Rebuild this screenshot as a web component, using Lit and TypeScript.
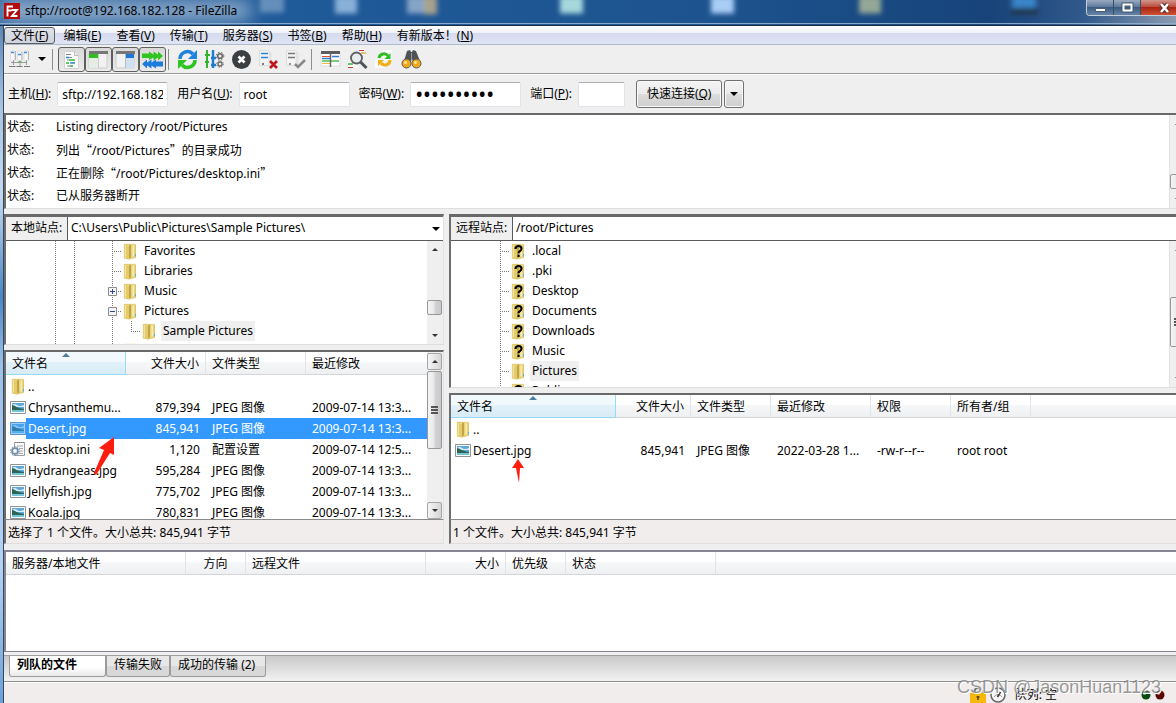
import { LitElement, html, css, svg } from "lit";
import { customElement } from "lit/decorators.js";
import { classMap } from "lit/directives/class-map.js";

const folder = svg`
  <path d="M2 1h7l5 1v12l-7 2.500-5-1z" fill="#ecd987"/>
  <path d="M2 1l5 1.500v13.500l-5-1z" fill="#f3e49b"/>
  <path d="M4 2l3 1v12.500l-3-.5z" fill="#e3cb6e"/>
  <path d="M7 2.500l2-1v13l-2 1z" fill="#c0a445"/>
  <path d="M9 2h4.500v12.500L9 15z" fill="#ead27a"/>
  <path d="M10.500 2.500h1.500v11h-1.500z" fill="#f8edb4"/>
  <path d="M2.300 1.300h11.200v13.200L7 16l-4.700-1z" fill="none" stroke="#d4bb58" stroke-width=".6"/>
  <path d="M13.500 11v2.500" stroke="#4fb3e6"/>`;

const picture = svg`
  <path d="M.5 2.500h15v12H.5z" fill="#fff" stroke="#8b939c"/>
  <path d="M2 4h12v9H2z" fill="#5ea7d8"/>
  <path d="M2 6q3-2 5 0t7 0v2H2z" fill="#d4ecf8"/>
  <path d="M2 6c3 0 4 3 12 4v1H2z" fill="#2d6655"/>
  <path d="M2 11h12v2H2z" fill="#74c4d8"/>`;

const glyphs: Record<string, unknown> = {
  folder,
  unknown: svg`${folder}<path d="M5.500 6q0-3 3-3t3 2.600q0 1.600-1.600 2.600-1.300.8-1.300 2M8.600 11.800v2.200" fill="none" stroke="#000" stroke-width="2.100"/>`,
  image: picture,
  imageSelected: svg`${picture}<path d="M0 2h16v13H0z" fill="#3399ff" opacity=".5"/>`,
  settings: svg`
    <path d="M4.500 1.500h10v13h-10z" fill="#fafafa" stroke="#9aa0a6"/>
    <path d="M5 1.500h9.500" stroke="#777" stroke-dasharray="1 1"/>
    <path d="M7 5h6M9 7.500h4M10 10h3M9 12.500h4" stroke="#a9adb2"/>
    <circle cx="5" cy="10" r="3" fill="#d6e2ee" stroke="#6f8ba8" stroke-width="1.600"/>
    <circle cx="5" cy="10" r="4.500" fill="none" stroke="#6f8ba8" stroke-dasharray="1.500 1.300"/>
    <circle cx="5" cy="10" r="1.200" fill="#fff"/>`,
};

const icon = (name: string) => html`<svg class="icon" viewBox="0 0 16 17" aria-hidden="true">${glyphs[name]}</svg>`;

const arrows = {
  down: html`<svg class="tri" viewBox="0 0 8 4" aria-hidden="true"><path d="M0 0h8L4 4z" /></svg>`,
  smallUp: html`<svg class="tri small" viewBox="0 0 8 4" aria-hidden="true"><path d="M0 4h8L4 0z" /></svg>`,
  smallDown: html`<svg class="tri small" viewBox="0 0 8 4" aria-hidden="true"><path d="M0 0h8L4 4z" /></svg>`,
};

const server = svg`<path d="M1.500 1.500h9l2 2v13h-11z" fill="#f4f4f4" stroke="#dcdcdc"/><path d="M10.500 2v14.500h3V4z" fill="#e2e2e2"/>`;

const tools: Record<string, unknown> = {
  sites: svg`
    <path d="M1.500 2h4v10h-4zM8.500 2h4v10h-4zM15 2h4v10h-4z" fill="#f8f8f8" stroke="#dadada" stroke-width=".8"/>
    <path d="M2 3.500h3M9 5.500h3M15 3.500h3" stroke="#3b8fe0" stroke-width="1.600"/>
    <path d="M6.500 2v9M13 3v8M19.500 2v9" stroke="#b5b5b5"/>
    <path d="M2 13.500h16M4.500 11v5M11 13v4M17.500 11v5" stroke="#9a9a9a" fill="none"/>
    <path d="M0 17.500h6.500M7.500 17.500h6M15 17.500h6" stroke="#777"/>
    <path d="M9.500 12.500h3" stroke="#5cb85c" stroke-width="1.500"/>`,
  log: svg`
    <path d="M3.500 2.500h10l4 4v13h-14z" fill="#fafafa" stroke="#d2d2d2"/>
    <path d="M13.500 2.500v4h4" fill="#eee" stroke="#bbb"/>
    <path d="M5 5.500h5M8 8.500h3M6 11h2M10 14h4M6 17h3" stroke="#888"/>
    <path d="M5 8.500h3M9 13.800h5" stroke="#1d87d8" stroke-width="1.300"/>
    <path d="M8 11h6M5 14h3M9 17h3" stroke="#35b535" stroke-width="1.300"/>`,
  local: svg`
    <path d="M1 4h18v15H1z" fill="#f2f2f2" stroke="#ccc"/><path d="M1 2h19v3H1z" fill="#777"/>
    <path d="M1 5h9v4H1z" fill="#2fbd22"/><path d="M1 9h9v10H1z" fill="#e6ede6"/><path d="M10.500 5v14" stroke="#ccc"/>`,
  remote: svg`
    <path d="M1 4h18v15H1z" fill="#f2f2f2" stroke="#ccc"/><path d="M1 2h19v3H1z" fill="#777"/>
    <path d="M11 5h8v4h-8z" fill="#1c78d4"/><path d="M11 9h8v10h-8z" fill="#cfe0f2"/><path d="M10.500 5v14" stroke="#bbb"/>`,
  queue: svg`
    <path d="M0 4.500h7v-2l4.500 3v-3l4.500 3v-3l5 4.500-5 4.500v-3l-4.500 3v-3L7 11V9H0z" fill="#2fc41f"/>
    <path d="M21 12.500h-7v-2l-4.500 3v-3l-4.500 3v-3L0 15l5 4.500v-3l4.500 3v-3l4.500 3v-2h7z" fill="#1d7cdb"/>`,
  refresh: svg`
    <path d="M3 10a7.500 7.500 0 0 1 13-5" fill="none" stroke="#1f82dc" stroke-width="3.600"/><path d="M20 1v9h-9z" fill="#1f82dc"/>
    <path d="M18 11a7.500 7.500 0 0 1-13 5" fill="none" stroke="#2bc420" stroke-width="3.600"/><path d="M1 20v-9h9z" fill="#2bc420"/>`,
  filter: svg`
    <path d="M3 1v18M1 6h5M1 13h4" stroke="#2fb52a" stroke-width="2"/>
    <path d="M9 1v18M7 9h5M7 16h5" stroke="#1d7cd0" stroke-width="2.400"/>
    <circle cx="16" cy="7" r="2.300" fill="none" stroke="#686868" stroke-width="1.600"/><circle cx="16" cy="7" r="3.800" fill="none" stroke="#686868" stroke-dasharray="1.500 1.600"/>
    <circle cx="16" cy="15" r="2" fill="none" stroke="#686868" stroke-width="1.400"/><circle cx="16" cy="15" r="3.300" fill="none" stroke="#686868" stroke-dasharray="1.300 1.300"/>`,
  cancel: svg`<circle cx="10.500" cy="10.500" r="9.500" fill="#3c3f42"/><path d="M7.500 7.500l6 6M13.500 7.500l-6 6" stroke="#fff" stroke-width="2.800"/>`,
  disconnect: svg`<g>${server}</g><path d="M3 4.500h7M3 8.500h7" stroke="#2a84d8" stroke-width="1.500"/><path d="M4 15h2" stroke="#555" stroke-width="1.500"/><path d="M12 12l7 7M19 12l-7 7" stroke="#c3161c" stroke-width="2.600"/>`,
  reconnect: svg`<g>${server}</g><path d="M3 4.500h7M3 8.500h7" stroke="#777" stroke-width="1.500"/><path d="M4 15h2" stroke="#777" stroke-width="1.500"/><path d="M10 15l3 3 7-7" fill="none" stroke="#888" stroke-width="2.600"/>`,
  listing: svg`
    <path d="M1 4h19v13H1z" fill="#fff" stroke="#ddd"/><path d="M1 2h19v3H1z" fill="#5c5c5c"/>
    <path d="M2 7.500h8" stroke="#e05030"/><path d="M2 9.500h8M12 7.500h7" stroke="#2a7cd0" stroke-width="1.300"/><path d="M2 12h17" stroke="#37b137" stroke-width="1.300"/><path d="M2 14.500h8" stroke="#edbd3c"/>
    <path d="M10.500 4v14" stroke="#666" stroke-width="1.500"/>`,
  search: svg`
    <path d="M10 0h8v6h-8zM1 13h9v6H1z" fill="#fff"/><path d="M12 1.500h5" stroke="#c33"/><path d="M14 4h5" stroke="#d8ae30" stroke-width="1.500"/><path d="M1 15h5" stroke="#2fae2f" stroke-width="1.500"/><path d="M1 18.500h5" stroke="#c33"/>
    <circle cx="9.500" cy="9" r="5.500" fill="#e9edf0" stroke="#5d6063" stroke-width="1.800"/><path d="M13.500 13l6 6" stroke="#505356" stroke-width="3"/>`,
  compare: svg`
    <path d="M9 1h9v11H9zM1 10h10v9H1z" fill="#fbfbfb"/>
    <path d="M5 9a5 5 0 0 1 9-2" fill="none" stroke="#2fbd22" stroke-width="3"/><path d="M16.500 4v6h-6z" fill="#2fbd22"/>
    <path d="M16 11a5 5 0 0 1-9 3" fill="none" stroke="#f0ae12" stroke-width="3"/><path d="M4 17v-6h6z" fill="#f0ae12"/>`,
  find: svg`
    <path d="M6 2l3-1 1 2h1l1-2 3 1 4 10-6 3-2-5-2 5-6-3z" fill="#505356"/><path d="M10.500 4v7" stroke="#999"/>
    <circle cx="5.500" cy="14.500" r="4.500" fill="#f0a81a" stroke="#5a5a5a"/><circle cx="15.500" cy="14.500" r="4.500" fill="#f0a81a" stroke="#5a5a5a"/>
    <circle cx="4.500" cy="13.500" r="1.600" fill="#ffe48f"/><circle cx="14.500" cy="13.500" r="1.600" fill="#ffe48f"/>`,
};

type Tool = { id: string; title: string; on?: boolean };
const toolGroups: Tool[][] = [
  [
    { id: "log", title: "消息日志", on: true },
    { id: "local", title: "本地目录树", on: true },
    { id: "remote", title: "远程目录树", on: true },
    { id: "queue", title: "传输队列", on: true },
  ],
  [
    { id: "refresh", title: "刷新" },
    { id: "filter", title: "过滤器" },
    { id: "cancel", title: "取消" },
    { id: "disconnect", title: "断开" },
    { id: "reconnect", title: "重新连接" },
  ],
  [
    { id: "listing", title: "目录比较" },
    { id: "search", title: "搜索" },
    { id: "compare", title: "同步浏览" },
    { id: "find", title: "查找" },
  ],
];

const menus = [
  ["文件", "F"], ["编辑", "E"], ["查看", "V"], ["传输", "T"],
  ["服务器", "S"], ["书签", "B"], ["帮助", "H"], ["有新版本！", "N"],
];

const log = [
  "Listing directory /root/Pictures",
  "列出“/root/Pictures”的目录成功",
  "正在删除“/root/Pictures/desktop.ini”",
  "已从服务器断开",
];

// Curly quotes take the full-width forms of the Chinese face.
const wideQuotes = (line: string) =>
  line.split(/([“”])/).map((part) => (part === "“" || part === "”" ? html`<span class="cjk">${part}</span>` : part));

type Node = { name: string; guides: string; icon: string; box?: string; current?: boolean };
// Guide letters: l = line, b = blank, t = branch, c = corner.
const localTree: Node[] = [
  { name: "Favorites", guides: "llbt", icon: "folder" },
  { name: "Libraries", guides: "llbt", icon: "folder" },
  { name: "Music", guides: "llbt", icon: "folder", box: "plus" },
  { name: "Pictures", guides: "llbt", icon: "folder", box: "minus" },
  { name: "Sample Pictures", guides: "llblc", icon: "folder", current: true },
  { name: "", guides: "llbt", icon: "folder" },
];
const remoteTree: Node[] = [
  ...[".local", ".pki", "Desktop", "Documents", "Downloads", "Music"].map((name) => ({ name, guides: "t", icon: "unknown" })),
  { name: "Pictures", guides: "t", icon: "folder", current: true },
  { name: "Public", guides: "t", icon: "unknown" },
];

type Col = { label: string; cls: string; align?: string };
type Row = { icon: string; cells: string[]; selected?: boolean };
const localCols: Col[] = [
  { label: "文件名", cls: "w120 sorted" },
  { label: "文件大小", cls: "w80", align: "right" },
  { label: "文件类型", cls: "w100" },
  { label: "最近修改", cls: "" },
];
const jpeg = "JPEG 图像";
const localRows: Row[] = [
  { icon: "folder", cells: ["..", "", "", ""] },
  { icon: "image", cells: ["Chrysanthemu...", "879,394", jpeg, "2009-07-14 13:3..."] },
  { icon: "imageSelected", cells: ["Desert.jpg", "845,941", jpeg, "2009-07-14 13:3..."], selected: true },
  { icon: "settings", cells: ["desktop.ini", "1,120", "配置设置", "2009-07-14 12:5..."] },
  { icon: "image", cells: ["Hydrangeas.jpg", "595,284", jpeg, "2009-07-14 13:3..."] },
  { icon: "image", cells: ["Jellyfish.jpg", "775,702", jpeg, "2009-07-14 13:3..."] },
  { icon: "image", cells: ["Koala.jpg", "780,831", jpeg, "2009-07-14 13:3..."] },
];
const remoteCols: Col[] = [
  { label: "文件名", cls: "w165 sorted" },
  { label: "文件大小", cls: "w75", align: "right" },
  { label: "文件类型", cls: "w80" },
  { label: "最近修改", cls: "w100" },
  { label: "权限", cls: "w80" },
  { label: "所有者/组", cls: "w80" },
  { label: "", cls: "" },
];
const remoteRows: Row[] = [
  { icon: "folder", cells: ["..", "", "", "", "", "", ""] },
  { icon: "image", cells: ["Desert.jpg", "845,941", jpeg, "2022-03-28 1...", "-rw-r--r--", "root root", ""] },
];
const queueCols: Col[] = [
  { label: "服务器/本地文件", cls: "w180" },
  { label: "方向", cls: "w60", align: "center" },
  { label: "远程文件", cls: "w180" },
  { label: "大小", cls: "w80", align: "right" },
  { label: "优先级", cls: "w60" },
  { label: "状态", cls: "w150" },
  { label: "", cls: "" },
];

const table = (cols: Col[], rows: Row[]) => html`
  <table>
    <thead>
      <tr>
        ${cols.map((c) => html`<th scope="col" class="${c.cls} ${c.align ?? ""}">${c.label}</th>`)}
      </tr>
    </thead>
    <tbody>
      ${rows.map(
        (r) => html`<tr class=${classMap({ selected: !!r.selected })}>
          ${r.cells.map((text, i) =>
            i === 0
              ? html`<td class="name"><span class="entry">${icon(r.icon)}<span class="entry-label">${text}</span></span></td>`
              : html`<td class=${cols[i].align ?? ""}>${text}</td>`,
          )}
        </tr>`,
      )}
    </tbody>
  </table>`;

const tree = (nodes: Node[]) => html`
  <ul class="tree">
    ${nodes.map(
      (n) => html`<li class="node">
        ${[...n.guides].map(
          (g, i) => html`<span class="guide ${g}">${n.box && i === n.guides.length - 1
            ? html`<svg class="box" viewBox="0 0 9 9" aria-hidden="true"><path d="M.5.5h8v8h-8z" fill="#f4f4f4" stroke="#8c8c8c" /><path d=${n.box === "plus" ? "M2 4.500h5M4.500 2v5" : "M2 4.500h5"} stroke="#2a4a9c" /></svg>`
            : ""}</span>`,
        )}
        ${icon(n.icon)}<span class=${classMap({ "node-label": true, current: !!n.current })}>${n.name}</span>
      </li>`,
    )}
  </ul>`;

const scrollbar = (kind: string) => html`
  <div class="scrollbar ${kind}" aria-hidden="true">
    <div class="track">
      <span class="step">${arrows.smallUp}</span>
      <span class="before"></span>
      <span class="thumb"><i></i></span>
      <span class="after"></span>
      <span class="step">${arrows.smallDown}</span>
    </div>
  </div>`;

@customElement("app-root")
export class AppRoot extends LitElement {
  static styles = css`
    * { box-sizing: border-box; }
    :host {
      display: flex;
      flex-direction: column;
      height: 100vh;
      overflow: hidden;
      background: #efefef;
      color: #000;
      font: 12px/16px "Noto Sans", "Noto Sans CJK SC", sans-serif;
    }
    button, input, select { font: inherit; color: inherit; margin: 0; border-radius: 0; }
    button { padding: 0; border: 0; background: none; white-space: nowrap; }
    .cjk { font-family: "Noto Sans CJK SC", sans-serif; }
    .titlebar {
      position: relative;
      flex: none;
      display: flex;
      justify-content: space-between;
      height: 26px;
      overflow: hidden;
      background: linear-gradient(90deg, #3f6fa4 0, #1f5a99 24%, #1d548f 60%, #17437a 84%, #30588a 92%, #8b9bb1 100%);
      border-bottom: 1px solid #1b2c45;
    }
    .backdrop { position: absolute; inset: 0; width: 100%; height: 100%; }
    .title { position: relative; display: flex; align-items: center; gap: 5px; height: 22px; padding-left: 4px; }
    .logo { width: 16px; height: 16px; }
    .window-buttons { position: relative; display: flex; height: 16px; border: 1px solid #c3cedb; border-width: 0 0 1px 1px; border-radius: 0 0 0 4px; overflow: hidden; }
    .window-buttons button { display: grid; place-items: center; width: 27px; border-right: 1px solid #3a4c63; background: linear-gradient(#9aabc0, #5f7a9b 45%, #395a80 46%, #6585a8); }
    .window-buttons .close { width: 35px; padding-left: 12px; border: 0; background: linear-gradient(#d0958b, #bd4f3e 45%, #a8200f 46%, #cd5133); }
    .window-buttons svg { width: 13px; height: 12px; }
    .frame { flex: 1; min-height: 0; display: flex; flex-direction: column; padding-left: 3px; background: linear-gradient(#5d86b6, #a9c4e2 12%, #c5d8ee 25%, #4a86c4 40%, #9dc0e6 50%, #b4d2f2 80%, #6ba0d6 100%); }
    .client { flex: 1; min-height: 0; display: flex; flex-direction: column; border-left: 1px solid #35475c; background: #efefef; }
    .menubar { flex: none; display: flex; gap: 1px; height: 19px; padding-top: 1px; background: linear-gradient(#fff 0, #eef1f8 38%, #d5dbed 40%, #dfe5f5 100%); border-bottom: 1px solid #b2b9cb; }
    .menubar button { height: 17px; padding: 0 6px; border: 1px solid transparent; border-radius: 3px; }
    .menubar button:first-child { border-color: #5b5f66; background: linear-gradient(#dfe2e8, #cfd3dd); }
    .toolbar { flex: none; display: flex; align-items: center; height: 29px; padding-left: 2px; border-bottom: 1px solid #9c9c9c; }
    .tool { display: grid; place-items: center; width: 27px; height: 25px; }
    .tool svg { width: 21px; height: 21px; }
    .tool.on { border: 1px solid #5f5f5f; border-radius: 3px; background: linear-gradient(#d9d9d9, #ebebeb); }
    .drop { display: grid; place-items: center; width: 17px; height: 25px; }
    .sep { width: 8px; height: 21px; padding-left: 2px; }
    .sep::before { content: ""; display: block; width: 1px; height: 100%; background: #8e8e8e; }
    .tri { display: block; width: 8px; height: 4px; }
    .tri.small { width: 6px; height: 3px; fill: #333; }
    .quick { flex: none; display: flex; align-items: center; gap: 9px; height: 39px; padding: 0 4px; border-top: 1px solid #fff; }
    .field { display: flex; align-items: center; gap: 6px; white-space: nowrap; }
    .field input { width: 111px; height: 25px; padding: 0 4px; border: 1px solid #e0e4ea; border-top-color: #abadb3; border-radius: 2px; background: #fff; outline: 0; }
    .field input[type="password"] { font-size: 21px; }
    .field .port { width: 47px; }
    .connect { display: flex; gap: 2px; padding-left: 2px; }
    .connect button { height: 28px; padding: 0 10px; border: 1px solid #707070; border-radius: 3px; background: linear-gradient(#f4f4f4, #ebebeb 48%, #dcdcdc 50%, #cfcfcf); box-shadow: inset 0 0 0 1px #fafafa; }
    .connect .more { padding: 0 5px; }
    .sunken { border-top: 2px solid #696969; border-left: 2px solid #6e6e6e; border-bottom: 1px solid #dedede; background: #fff; }
    .log { flex: none; display: flex; height: 96px; }
    .log dl { flex: 1; min-width: 0; margin: 0; padding-left: 1px; display: grid; grid-template-columns: 49px 1fr; grid-auto-rows: 23px; line-height: 23px; white-space: nowrap; }
    .log dd { margin: 0; }
    .panes { flex: 1; min-height: 0; display: grid; grid-template-columns: minmax(0, 440fr) minmax(0, 727fr); grid-template-rows: minmax(0, 1fr); gap: 5px; padding-top: 5px; }
    .pane { min-width: 0; min-height: 0; display: grid; }
    .local { grid-template-rows: minmax(0, 131fr) 5px minmax(0, 170fr) 24px; }
    .remote { grid-template-rows: minmax(0, 174fr) 5px minmax(0, 127fr) 24px; }
    .local .sunken, .local .status { border-right: 1px solid #e3e3e3; }
    .site { grid-row: 1; display: flex; flex-direction: column; min-height: 0; overflow: hidden; border-top-width: 3px; }
    .path { flex: none; display: flex; height: 24px; border-bottom: 1px solid #5a5a5a; }
    .path label { width: 62px; padding-left: 5px; line-height: 22px; white-space: nowrap; background: #efefef; border-right: 1px solid #5a5a5a; }
    .combo { position: relative; flex: 1; min-width: 0; display: flex; align-items: center; justify-content: flex-end; padding-right: 3px; }
    .combo select { position: absolute; inset: 0; width: 100%; padding: 0 3px 2px; border: 0; background: none; appearance: none; outline: 0; }
    .scroller { flex: 1; min-height: 0; display: flex; }
    .tree { flex: 1; min-width: 0; margin: 0; padding: 0 0 0 49px; list-style: none; overflow: hidden; }
    .node { display: flex; align-items: center; height: 20px; white-space: nowrap; }
    .guide { position: relative; flex: none; width: 19px; height: 20px; }
    .guide.l, .guide.t { background: repeating-linear-gradient(#777 0 1px, #fff 1px 2px) 0 0 / 1px 100% no-repeat; }
    .guide.t, .guide.c { width: 10px; }
    .guide.c { background: repeating-linear-gradient(#777 0 1px, #fff 1px 2px) 0 0 / 1px 10px no-repeat; }
    .guide.t::after, .guide.c::after { content: ""; position: absolute; inset: 10px 0 auto 0; height: 1px; background: repeating-linear-gradient(90deg, #777 0 1px, #fff 1px 2px); }
    .box { position: absolute; z-index: 1; top: 6px; left: -4px; width: 9px; height: 9px; }
    .icon { flex: none; width: 16px; height: 17px; }
    .node-label { margin-left: 4px; padding: 0 2px; line-height: 20px; }
    .current { background: #efefef; }
    .scrollbar { flex: none; width: 16px; overflow: hidden; background: #efefef; }
    .track { display: flex; flex-direction: column; width: 16px; height: 100%; }
    .step { flex: none; display: grid; place-items: center; width: 15px; height: 17px; }
    .thumb { flex: none; display: grid; place-items: center; width: 15px; border: 1px solid #979797; border-radius: 2px; background: linear-gradient(90deg, #f5f5f5, #e9e9eb 45%, #d3d3d6 55%, #c9c9cc); }
    .thumb i { width: 7px; height: 8px; background: repeating-linear-gradient(#555 0 2px, transparent 2px 3px); }
    .cut { width: 6px; box-shadow: -1px 0 #e2e2e2; }
    .short .thumb, .logbar .thumb { height: 15px; }
    .short i, .logbar i { display: none; }
    .short .before { flex: 42 1 0; }
    .short .after { flex: 12 1 0; }
    .logbar .before { flex: 43 1 0; }
    .logbar .after { flex: 2 1 0; }
    .mid .before { flex: 39 1 0; }
    .mid .after { flex: 23 1 0; }
    .mid .thumb { height: 50px; }
    .list .step { border: 1px solid #a5a5a5; border-radius: 2px; background: linear-gradient(90deg, #f5f5f5, #d5d5d8); }
    .list .track { padding-top: 1px; }
    .list .before { height: 1px; }
    .list .after { flex: 54 1 0; }
    .list .thumb { flex: 77 1 0; }
    .files { grid-row: 3; position: relative; display: flex; flex-direction: column; min-height: 0; border-bottom: 1px solid #8a8a8a; }
    .grid { flex: 1; min-width: 0; overflow: hidden; }
    table { width: 100%; border-collapse: separate; border-spacing: 0; table-layout: fixed; }
    th { position: relative; height: 23px; padding: 2px 6px 0; font-weight: 400; text-align: left; line-height: 20px; white-space: nowrap; border-right: 1px solid #e1e3e6; border-bottom: 1px solid #d3d5d8; background: linear-gradient(#fff 0 10px, #f6f7f9 10px, #eff0f2 100%); }
    th:last-child { border-right: 0; }
    th.sorted { border-right-color: #96d9f9; border-bottom-color: #96d9f9; background: linear-gradient(#f2f9fc 0 10px, #e1f1f9 10px, #d8ecf6 100%); }
    .sorted::after { content: ""; position: absolute; top: 1px; left: 50%; margin-left: -4px; border: 4px solid transparent; border-width: 0 4px 4px; border-bottom-color: #4d7f9d; }
    td { height: 21px; padding: 0 6px; line-height: 21px; white-space: nowrap; overflow: hidden; }
    tbody tr:first-child td { height: 22px; }
    .right { text-align: right; }
    .center { text-align: center; }
    td.name { padding: 0 0 0 4px; overflow: visible; }
    .entry { display: flex; align-items: center; gap: 2px; }
    .selected { color: #fff; }
    .selected td { background: #3399ff; }
    .selected td.name { background: linear-gradient(90deg, #fff 20px, #3399ff 20px); }
    .w60 { width: 60px; } .w75 { width: 75px; } .w80 { width: 80px; } .w100 { width: 100px; } .w120 { width: 120px; }
    .w150 { width: 150px; } .w165 { width: 165px; } .w180 { width: 180px; }
    .status { grid-row: 4; padding: 1px 0 0 2px; line-height: 24px; white-space: nowrap; overflow: hidden; background: #f0edec; border-left: 2px solid #6e6e6e; border-bottom: 1px solid #dedede; }
    .pointer { position: absolute; overflow: visible; fill: #ff1d10; }
    .pointer.one { left: 88px; top: 85px; width: 22px; height: 40px; }
    .pointer.two { left: 61px; top: 64px; width: 13px; height: 25px; }
    .queue { flex: none; height: 102px; margin-top: 6px; border-top: 2px solid #858593; border-left: 2px solid #858593; border-bottom: 1px solid #858593; background: #fff; overflow: hidden; }
    .tabs { flex: none; display: flex; height: 27px; margin-top: 3px; padding: 0 5px 4px; border-top: 1px solid #a0a0a0; border-bottom: 1px solid #8f8f8f; background: linear-gradient(#c9c9c9, #f2f2f2); }
    .tabs button { padding: 0 10px 2px 7px; border: 1px solid #9b9b9b; border-top: 0; border-radius: 0 0 3px 3px; background: linear-gradient(#e7e7e7 50%, #d8d8d8 50%); }
    .tabs .active { padding-right: 28px; font-weight: 700; background: linear-gradient(#fff 55%, #e9e9e9); }
    .tabs .failed { padding-right: 7px; }
    .bottom { position: relative; flex: none; display: flex; align-items: center; justify-content: flex-end; gap: 4px; height: 21px; padding: 3px 11px 0 0; background: #f0edec; border-top: 1px solid #fff; }
    .bottom svg { width: 16px; height: 16px; }
    .queue-state { padding: 0 79px 0 5px; }
    .bottom .leds { width: 25px; height: 12px; }
    .watermark { position: absolute; right: 15px; top: -7px; font: 18px/22px "Liberation Sans", sans-serif; color: rgba(120, 120, 120, .75); text-shadow: 1px 1px 0 #fff; }
  `;

  render() {
    return html`
      <header class="titlebar">
        <svg class="backdrop" viewBox="0 0 1176 26" preserveAspectRatio="none" aria-hidden="true">
          <defs><filter id="soft" x="-50%" y="-50%" width="200%" height="200%"><feGaussianBlur stdDeviation="2.500" /></filter>
          <filter id="glow" x="-50%" y="-200%" width="200%" height="500%"><feGaussianBlur stdDeviation="9" /></filter></defs>
          <path d="M5 2h245v18H5z" fill="#c0d0e2" opacity=".75" filter="url(#glow)" />
          <g filter="url(#soft)">
            <path d="M260-4h24v17h-24z" fill="#a9c4dd" opacity=".5" /><path d="M335-4h22v18h-22z" fill="#9cc0e4" opacity=".85" />
            <path d="M407-4h18v18h-18z" fill="#9fb7d4" opacity=".8" /><path d="M424-4h13v19h-13z" fill="#c9b48a" opacity=".8" />
            <path d="M560-4h23v18h-23z" fill="#a6d8dc" /><path d="M711-4h23v18h-23z" fill="#a9cdf4" />
            <path d="M859-4h22v18h-22z" fill="#b4bf9c" opacity=".8" /><path d="M1011 8h27v7h-27z" fill="#21364f" />
            <path d="M1012-4h24v12h-24z" fill="#3f95dc" opacity=".8" />
          </g>
          <path d="M0 24.500h1176" stroke="#8fb0d0" />
        </svg>
        <div class="title">
          <svg class="logo" viewBox="0 0 16 16" aria-hidden="true"><path d="M0 0h16v16H0z" fill="#b30b0b" /><path d="M3.500 13.500V3.500h5.500M3.500 7.500h4M7.500 7h5.500l-5 6h5.500" fill="none" stroke="#fff" stroke-width="1.900" /></svg>
          <span>sftp://root@192.168.182.128 - FileZilla</span>
        </div>
        <div class="window-buttons">
          <button aria-label="最小化"><svg viewBox="0 0 13 12"><path d="M1.500 6.500h10v3h-10z" fill="#fff" stroke="#4b5d74" /></svg></button>
          <button aria-label="最大化"><svg viewBox="0 0 13 12"><path d="M2.500 2.500h8v6h-8z" fill="none" stroke="#44566d" stroke-width="4" /><path d="M2.500 2.500h8v6h-8z" fill="none" stroke="#fff" stroke-width="2" /></svg></button>
          <button class="close" aria-label="关闭"><svg viewBox="0 0 13 12"><path d="M3 2l7 8M10 2l-7 8" stroke="#5a2a2a" stroke-width="4.500" /><path d="M3 2l7 8M10 2l-7 8" stroke="#fff" stroke-width="2.600" /></svg></button>
        </div>
      </header>
      <div class="frame" lang="zh-CN">
        <div class="client">
          <nav class="menubar">${menus.map(([t, k]) => html`<button>${t}(<u>${k}</u>)</button>`)}</nav>
          <div class="toolbar">
            <button class="tool" aria-label="站点管理器"><svg viewBox="0 0 21 21">${tools.sites}</svg></button>
            <button class="drop" aria-label="站点列表">${arrows.down}</button>
            ${toolGroups.map(
              (group) => html`<span class="sep"></span>${group.map(
                (t) => html`<button class=${classMap({ tool: true, on: !!t.on })} aria-label=${t.title}><svg viewBox="0 0 21 21">${tools[t.id]}</svg></button>`,
              )}`,
            )}
          </div>
          <form class="quick" @submit=${(e: Event) => e.preventDefault()}>
            <div class="field"><label for="host">主机(<u>H</u>):</label><input id="host" value="sftp://192.168.182.128" /></div>
            <div class="field"><label for="user">用户名(<u>U</u>):</label><input id="user" value="root" /></div>
            <div class="field"><label for="pass">密码(<u>W</u>):</label><input id="pass" type="password" value="0123456789" /></div>
            <div class="field"><label for="port">端口(<u>P</u>):</label><input id="port" class="port" /></div>
            <div class="connect"><button type="submit">快速连接(<u>Q</u>)</button><button type="button" class="more" aria-label="历史">${arrows.down}</button></div>
          </form>
          <section class="log sunken">
            <dl>${log.map((line) => html`<dt>状态:</dt><dd>${wideQuotes(line)}</dd>`)}</dl>
            ${scrollbar("logbar cut")}
          </section>
          <main class="panes">
            <section class="pane local">
              <div class="site sunken">
                <div class="path">
                  <label for="local-path">本地站点:</label>
                  <div class="combo"><select id="local-path"><option>C:\\Users\\Public\\Pictures\\Sample Pictures\\</option></select>${arrows.down}</div>
                </div>
                <div class="scroller">${tree(localTree)}${scrollbar("short")}</div>
              </div>
              <div class="files sunken">
                <div class="scroller"><div class="grid">${table(localCols, localRows)}</div>${scrollbar("list")}</div>
                <svg class="pointer one" viewBox="0 0 22 40" aria-hidden="true"><path d="M20 0L5 11l5 2L0 36l2 2L16 16l4 2z" /></svg>
              </div>
              <div class="status">选择了 1 个文件。大小总共: 845,941 字节</div>
            </section>
            <section class="pane remote">
              <div class="site sunken">
                <div class="path">
                  <label for="remote-path">远程站点:</label>
                  <div class="combo"><select id="remote-path"><option>/root/Pictures</option></select></div>
                </div>
                <div class="scroller">${tree(remoteTree)}${scrollbar("mid cut")}</div>
              </div>
              <div class="files sunken">
                <div class="scroller"><div class="grid">${table(remoteCols, remoteRows)}</div></div>
                <svg class="pointer two" viewBox="0 0 13 25" aria-hidden="true"><path d="M6 0L0 9h4l3 15 1-15h4z" /></svg>
              </div>
              <div class="status">1 个文件。大小总共: 845,941 字节</div>
            </section>
          </main>
          <section class="queue">${table(queueCols, [])}</section>
          <div class="tabs">
            <button class="active">列队的文件</button><button class="failed">传输失败</button><button>成功的传输 (2)</button>
          </div>
          <footer class="bottom">
            <svg viewBox="0 0 16 16" aria-hidden="true"><path d="M4.500 8V4.500a3.500 3.500 0 0 1 7 0V8" fill="none" stroke="#777" stroke-width="2" /><path d="M0 6h16v10H0z" fill="#f6b80c" /><path d="M8 9v4M6.500 10h3" stroke="#5b4a10" stroke-width="1.500" /></svg>
            <svg viewBox="0 0 16 16" aria-hidden="true"><circle cx="8" cy="8" r="7" fill="#f7f7f7" stroke="#666" stroke-width="1.500" /><path d="M4 10a4.500 4.500 0 0 1 8 0" fill="none" stroke="#999" /><path d="M7.500 10l3-5" stroke="#333" stroke-width="1.500" /></svg>
            <span class="queue-state">队列: 空</span>
            <svg class="leds" viewBox="0 0 25 12" aria-hidden="true"><circle cx="6" cy="6" r="4.500" fill="#0c4a12" /><circle cx="4.500" cy="4.500" r="1.500" fill="#7fae80" /><circle cx="20" cy="6" r="4.500" fill="#5c0808" /><circle cx="18.500" cy="4.500" r="1.500" fill="#b58080" /></svg>
            <span class="watermark">CSDN @JasonHuan1123</span>
          </footer>
        </div>
      </div>
    `;
  }
}
